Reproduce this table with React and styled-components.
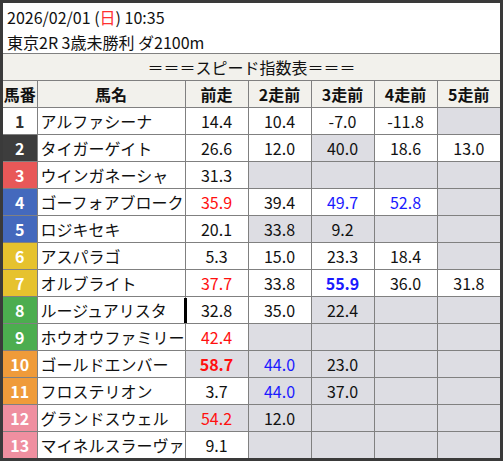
import styled, { createGlobalStyle } from 'styled-components';

const GlobalStyle = createGlobalStyle`
  html, body {
    margin: 0;
    padding: 0;
    background: #ffffff;
  }
  body {
    font-family: "Noto Sans CJK JP", "Noto Sans", sans-serif;
    color: #111;
  }
`

const Frame = styled.div`
  width: 503px;
  height: 461px;
  box-sizing: border-box;
  border: 3px solid #3a3a3a;
  background: #fff;
  overflow: hidden;
`

const Info = styled.div`
  height: 50px;
  border-bottom: 1px solid #808080;
  padding: 2px 0 0 4px;
  box-sizing: content-box;
  font-size: 16px;
  line-height: 25px;
  box-sizing: border-box;
  height: 51px;
`

const Sun = styled.span`
  color: #ff3030;
`

const Table = styled.table`
  border-collapse: collapse;
  border-style: hidden;
  table-layout: fixed;
  width: 497px;
  font-size: 16px;
`

const Band = styled.td`
  background: #f2f1ec;
  height: 26px;
  padding: 0;
  border: 1px solid #808080;
  text-align: center;
  line-height: 26px;
`

const Head = styled.th`
  background: #f2f1ec;
  height: 26px;
  padding: 0;
  border: 1px solid #808080;
  font-weight: 700;
  text-align: center;
  line-height: 26px;
`

const Num = styled.td`
  height: 26px;
  padding: 0;
  border: 1px solid #808080;
  text-align: center;
  font-weight: 700;
  line-height: 26px;
  background: ${p => p.$bg};
  color: ${p => p.$fg};
`

const Name = styled.td`
  height: 26px;
  padding: 0 0 0 3px;
  border: 1px solid #808080;
  white-space: nowrap;
  overflow: visible;
  line-height: 26px;
  position: relative;

  ${p => p.$marked && `
    &::after {
      content: "";
      position: absolute;
      right: -2px;
      top: 1px;
      width: 3px;
      height: 25px;
      background: #000;
    }
  `}
`

const Cell = styled.td`
  height: 26px;
  padding: 0;
  border: 1px solid #808080;
  text-align: center;
  line-height: 26px;
  background: ${p => (p.$gray ? '#dddde3' : '#fff')};
  color: ${p => (p.$tone === 'red' ? '#ff1010' : p.$tone === 'blue' ? '#1a1aff' : '#111')};
  font-weight: ${p => (p.$bold ? 700 : 400)};
`

const waku = {
  1: ['#ffffff', '#333'],
  2: ['#3d3d3d', '#fff'],
  3: ['#e85858', '#fff'],
  4: ['#4469bd', '#fff'],
  5: ['#4469bd', '#fff'],
  6: ['#e6c22e', '#fff'],
  7: ['#e6c22e', '#fff'],
  8: ['#4cad4f', '#fff'],
  9: ['#4cad4f', '#fff'],
  10: ['#ef9b3a', '#fff'],
  11: ['#ef9b3a', '#fff'],
  12: ['#ef8fa0', '#fff'],
  13: ['#ef8fa0', '#fff'],
}

const G = { g: true }

const horses = [
  ['アルファシーナ', [{ v: '14.4' }, { v: '10.4' }, { v: '-7.0' }, { v: '-11.8' }, G]],
  ['タイガーゲイト', [{ v: '26.6' }, { v: '12.0' }, { v: '40.0', g: true }, { v: '18.6' }, { v: '13.0' }]],
  ['ウインガネーシャ', [{ v: '31.3' }, G, G, G, G]],
  ['ゴーフォアブローク', [{ v: '35.9', t: 'red' }, { v: '39.4' }, { v: '49.7', t: 'blue' }, { v: '52.8', t: 'blue' }, G]],
  ['ロジキセキ', [{ v: '20.1' }, { v: '33.8', g: true }, { v: '9.2', g: true }, G, G]],
  ['アスパラゴ', [{ v: '5.3' }, { v: '15.0' }, { v: '23.3' }, { v: '18.4' }, G]],
  ['オルブライト', [{ v: '37.7', t: 'red' }, { v: '33.8' }, { v: '55.9', t: 'blue', b: true }, { v: '36.0' }, { v: '31.8' }]],
  ['ルージュアリスタ', [{ v: '32.8' }, { v: '35.0' }, { v: '22.4', g: true }, G, G], true],
  ['ホウオウファミリー', [{ v: '42.4', t: 'red' }, G, G, G, G]],
  ['ゴールドエンバー', [{ v: '58.7', t: 'red', b: true, g: true }, { v: '44.0', t: 'blue', g: true }, { v: '23.0', g: true }, G, G]],
  ['フロステリオン', [{ v: '3.7' }, { v: '44.0', t: 'blue', g: true }, { v: '37.0', g: true }, G, G]],
  ['グランドスウェル', [{ v: '54.2', t: 'red', g: true }, { v: '12.0', g: true }, G, G, G]],
  ['マイネルスラーヴァ', [{ v: '9.1' }, G, G, G, G]],
]

const heads = ['前走', '2走前', '3走前', '4走前', '5走前']

export default function App() {
  return (
    <>
      <GlobalStyle />
      <Frame>
        <Info>
          <div>2026/02/01 (<Sun>日</Sun>) 10:35</div>
          <div>東京2R 3歳未勝利 ダ2100m</div>
        </Info>
        <Table>
          <colgroup>
            <col style={{ width: 34 }} />
            <col style={{ width: 148 }} />
            {heads.map(h => <col key={h} style={{ width: 63 }} />)}
          </colgroup>
          <tbody>
            <tr>
              <Band colSpan={7}>＝＝＝スピード指数表＝＝＝</Band>
            </tr>
            <tr>
              <Head>馬番</Head>
              <Head>馬名</Head>
              {heads.map(h => <Head key={h}>{h}</Head>)}
            </tr>
            {horses.map(([name, cells, marked], i) => {
              const [bg, fg] = waku[i + 1]
              return (
                <tr key={name}>
                  <Num $bg={bg} $fg={fg}>{i + 1}</Num>
                  <Name $marked={marked}>{name}</Name>
                  {cells.map((c, j) => (
                    <Cell key={j} $gray={c.g} $tone={c.t} $bold={c.b}>{c.v}</Cell>
                  ))}
                </tr>
              )
            })}
          </tbody>
        </Table>
      </Frame>
    </>
  )
}
